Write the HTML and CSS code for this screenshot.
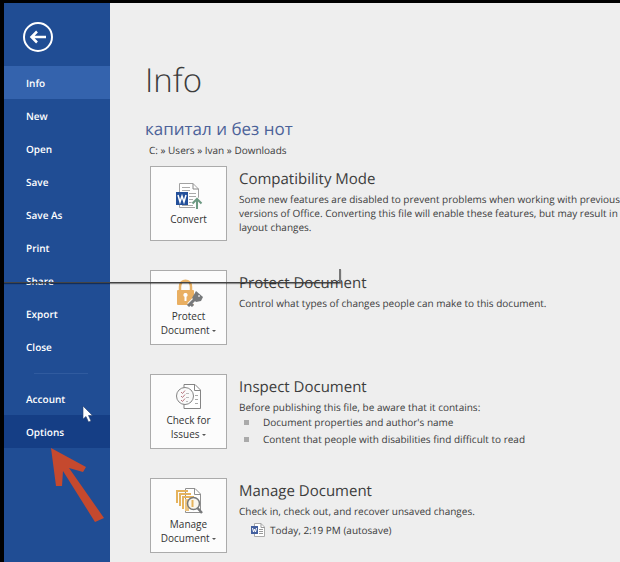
FILE: index.html
```
<!DOCTYPE html>
<html lang="en">
<head>
  <meta charset="UTF-8">
  <meta name="viewport" content="width=device-width, initial-scale=1.0">
  <title>Info</title>
  <link rel="stylesheet" href="styles.css">
</head>
<body>
  <nav class="sidebar">
    <button class="back" type="button" aria-label="Back">
      <svg width="32" height="32" viewBox="0 0 32 32" fill="none" stroke="#fff">
        <circle cx="16" cy="16" r="14" stroke-width="2"/>
        <path d="M24 16H10M15 10.500L9.500 16L15 21.500" stroke-width="2.500"/>
      </svg>
    </button>
    <a class="item active" href="#info">Info</a>
    <a class="item" href="#new">New</a>
    <a class="item" href="#open">Open</a>
    <a class="item" href="#save">Save</a>
    <a class="item" href="#save-as">Save As</a>
    <a class="item" href="#print">Print</a>
    <a class="item" href="#share">Share</a>
    <a class="item" href="#export">Export</a>
    <a class="item" href="#close">Close</a>
    <hr class="separator">
    <a class="item" href="#account">Account</a>
    <a class="item hovered" href="#options">Options</a>
  </nav>

  <main class="content">
    <h1>Info</h1>
    <h2 class="file-name">капитал и без нот</h2>
    <p class="path">C: » Users » Ivan » Downloads</p>

    <div class="sections">
      <section class="section">
        <button class="tile" type="button">
          <svg width="28" height="28" viewBox="0 0 28 28" fill="none">
            <path d="M4.500 1.500H18L23.500 7V25.500H4.500Z" fill="#fff" stroke="#a2a2a2"/>
            <path d="M18 1.500V7H23.500" stroke="#888"/>
            <path d="M7 5.500H15M7 8.500H15M14 11.500H21M14 14.500H21M14 17.500H18M14 20.500H18M7 23.500H18" stroke="#aaa"/>
            <rect x="1" y="10" width="12" height="13" fill="#24509a"/>
            <path d="M3 13L5 20L7 14L9 20L11 13" stroke="#fff" stroke-width="1.500"/>
            <path d="M22 28V17M17.500 21.500L22 17L26.500 21.500" stroke="#fafafa" stroke-width="4"/>
            <path d="M22 27V17M17.500 21.500L22 17L26.500 21.500" stroke="#6c9982" stroke-width="2"/>
          </svg>
          <span>Convert</span>
        </button>
        <div class="details">
          <h3>Compatibility Mode</h3>
          <p>Some new features are disabled to prevent problems when working with previous versions of Office. Converting this file will enable these features, but may result in layout changes.</p>
        </div>
      </section>

      <section class="section">
        <button class="tile" type="button">
          <svg width="28" height="28" viewBox="0 0 28 28" fill="none">
            <path d="M5 13V8C5 -.500 16 -.500 16 8V13" stroke="#e9b266" stroke-width="2.500"/>
            <rect x="2" y="11" width="17" height="15" rx="1" fill="#e9af62"/>
            <path d="M10.500 14a2 2 0 0 1 1 3.800V22h-2v-4.200a2 2 0 0 1 1-3.800Z" fill="#fff"/>
            <path d="M14 26L20 20" stroke="#fafafa" stroke-width="5"/>
            <path d="M13 27L21 19M15.500 24.500L18 27" stroke="#77797b" stroke-width="3"/>
            <path d="M21 12L28 18L26 22L21 23L17 19Z" fill="#77797b"/>
            <circle cx="24" cy="17" r="1" fill="#ddd"/>
          </svg>
          <span>Protect<br>Document <i class="caret"></i></span>
        </button>
        <div class="details">
          <h3>Protect Document</h3>
          <p>Control what types of changes people can make to this document.</p>
        </div>
      </section>

      <section class="section">
        <button class="tile" type="button">
          <svg width="28" height="28" viewBox="0 0 28 28" fill="none" stroke="#858585">
            <path d="M9 1.500H20L25.500 7V25.500H9Z" fill="#fff"/>
            <path d="M19.500 1.500V7.500H25.500"/>
            <path d="M20 12.500H23M20 16.500H23M20 20.500H23" stroke="#aaa"/>
            <circle cx="10" cy="13" r="8.500" fill="#fafafa"/>
            <path d="M6 9L7.500 10.500L10 7.500M6 13L7.500 14.500L10 11.500M6 17L7.500 18.500L10 15.500" stroke="#b77780"/>
            <path d="M11 10.500H14M11 14.500H14M11 18.500H13" stroke="#bbb"/>
          </svg>
          <span>Check for<br>Issues <i class="caret"></i></span>
        </button>
        <div class="details">
          <h3>Inspect Document</h3>
          <p>Before publishing this file, be aware that it contains:</p>
          <ul class="findings">
            <li>Document properties and author's name</li>
            <li>Content that people with disabilities find difficult to read</li>
          </ul>
        </div>
      </section>

      <section class="section">
        <button class="tile" type="button">
          <svg width="28" height="28" viewBox="0 0 28 28" fill="none">
            <path d="M10.500 1.500H20L25.500 7V25.500H10.500Z" fill="#fff" stroke="#909090"/>
            <path d="M19.500 1.500V7.500H25.500" stroke="#909090"/>
            <path d="M2 16V4H13M5 19V7H16M8 22V10H19" stroke="#e5b35d" stroke-width="2"/>
            <path d="M10 12H14V24H10Z" fill="#edc47e"/>
            <circle cx="18.500" cy="16.500" r="6" fill="#faf6ed" stroke="#77797b" stroke-width="1.500"/>
            <path d="M17.500 13V20" stroke="#e5b35d" stroke-width="2"/>
            <path d="M22.500 21L27 26" stroke="#77797b" stroke-width="2.500"/>
          </svg>
          <span>Manage<br>Document <i class="caret"></i></span>
        </button>
        <div class="details">
          <h3>Manage Document</h3>
          <p>Check in, check out, and recover unsaved changes.</p>
          <a class="version" href="#autosave">
            <svg width="16" height="14" viewBox="0 0 16 14" fill="none">
              <path d="M4.500 .500H11L14.500 4V13.500H4.500Z" fill="#fff" stroke="#aaa"/>
              <path d="M11 .500V4.500H14.500M9 6.500H13M9 8.500H13M9 10.500H13" stroke="#999"/>
              <rect x="1" y="3" width="7" height="8" fill="#435f9e"/>
              <path d="M2.500 5L3.500 9L4.500 6L5.500 9L6.500 5" stroke="#fff"/>
            </svg>
            Today, 2:19 PM (autosave)
          </a>
        </div>
      </section>
    </div>
  </main>

  <div class="guide"></div>
  <svg class="cursor" width="12" height="18" viewBox="0 0 12 18">
    <path d="M1 1V14L4 11.500L6.500 17L9 16L6.500 10.500H10.500Z" fill="#fff" stroke="#26406f" stroke-width=".600"/>
  </svg>
  <svg class="pointer" width="54" height="75" viewBox="0 0 54 75">
    <path d="M0 0L35 19L32 24L18 20L53 70L44 74L12 23L11 38L5 38Z" fill="#c5492e"/>
  </svg>
</body>
</html>
```
FILE: styles.css
```
* {
  box-sizing: border-box;
}

body {
  margin: 0;
  min-height: 100vh;
  display: flex;
  position: relative;
  border-top: 3px solid #000;
  border-left: 4px solid #000;
  background: #eee;
  color: #3c3c3c;
  font-family: "Open Sans", "Noto Sans", sans-serif;
  font-size: 10px;
  line-height: 14px;
  text-rendering: geometricPrecision;
}

h1, h2, h3, p, ul {
  margin: 0;
  padding: 0;
  font-weight: normal;
}

a {
  color: inherit;
  text-decoration: none;
}

/* sidebar */
.sidebar {
  flex: 0 0 106px;
  display: flex;
  flex-direction: column;
  background: #204d94;
  color: #fff;
}

.back {
  align-self: flex-start;
  display: block;
  width: 32px;
  height: 32px;
  margin: 18px 0 13px 18px;
  padding: 0;
  border: 0;
  background: none;
}

.item {
  padding: 2px 0 0 22px;
  font-weight: 600;
  line-height: 31px;
}

.item.active {
  background: #3463ad;
}

.item.hovered {
  background: #153e85;
}

.separator {
  width: 54px;
  margin: 10px 0 8px 30px;
  border: 0;
  border-top: 1px solid #305b9f;
}

/* content */
.content {
  flex: 1;
  min-width: 0;
  padding: 56px 0 8px 35px;
}

h1 {
  font-size: 33px;
  font-weight: 300;
  line-height: 42px;
}

.file-name {
  margin-top: 16px;
  color: #4c6299;
  font-size: 17px;
  line-height: 24px;
}

.path {
  padding: 2px 0 0 4px;
}

.sections {
  display: grid;
  gap: 29px;
  padding: 9px 0 0 5px;
}

.section {
  display: flex;
  gap: 12px;
}

.tile {
  flex: 0 0 77px;
  height: 75px;
  display: flex;
  flex-direction: column;
  align-items: center;
  justify-content: center;
  gap: 2px;
  padding: 0;
  border: 1px solid #ababab;
  background: #fcfcfc;
  color: #333;
  font: inherit;
  font-weight: 500;
}

.caret {
  display: inline-block;
  vertical-align: 2px;
  border: 2px solid transparent;
  border-top-color: #555;
  border-bottom: 0;
}

.details {
  flex: 1;
  min-width: 0;
}

h3 {
  padding: 3px 0;
  font-size: 15px;
  line-height: 20px;
}

.findings {
  list-style: none;
}

.findings li {
  display: flex;
  align-items: center;
  gap: 14px;
  padding-left: 5px;
  line-height: 17px;
}

.findings li::before {
  content: "";
  width: 5px;
  height: 5px;
  background: #aaa;
}

.version {
  display: flex;
  align-items: center;
  gap: 4px;
  margin-top: 5px;
  padding-left: 11px;
}

/* annotations over the page */
.guide {
  position: absolute;
  top: 266px;
  left: 0;
  width: 337px;
  height: 14px;
  border-right: 2px solid #777;
  border-bottom: 1px solid #444;
  box-shadow: 0 1px 1px rgba(0, 0, 0, 0.4);
  pointer-events: none;
}

.cursor {
  position: absolute;
  top: 402px;
  left: 78px;
}

.pointer {
  position: absolute;
  top: 445px;
  left: 47px;
}
```
